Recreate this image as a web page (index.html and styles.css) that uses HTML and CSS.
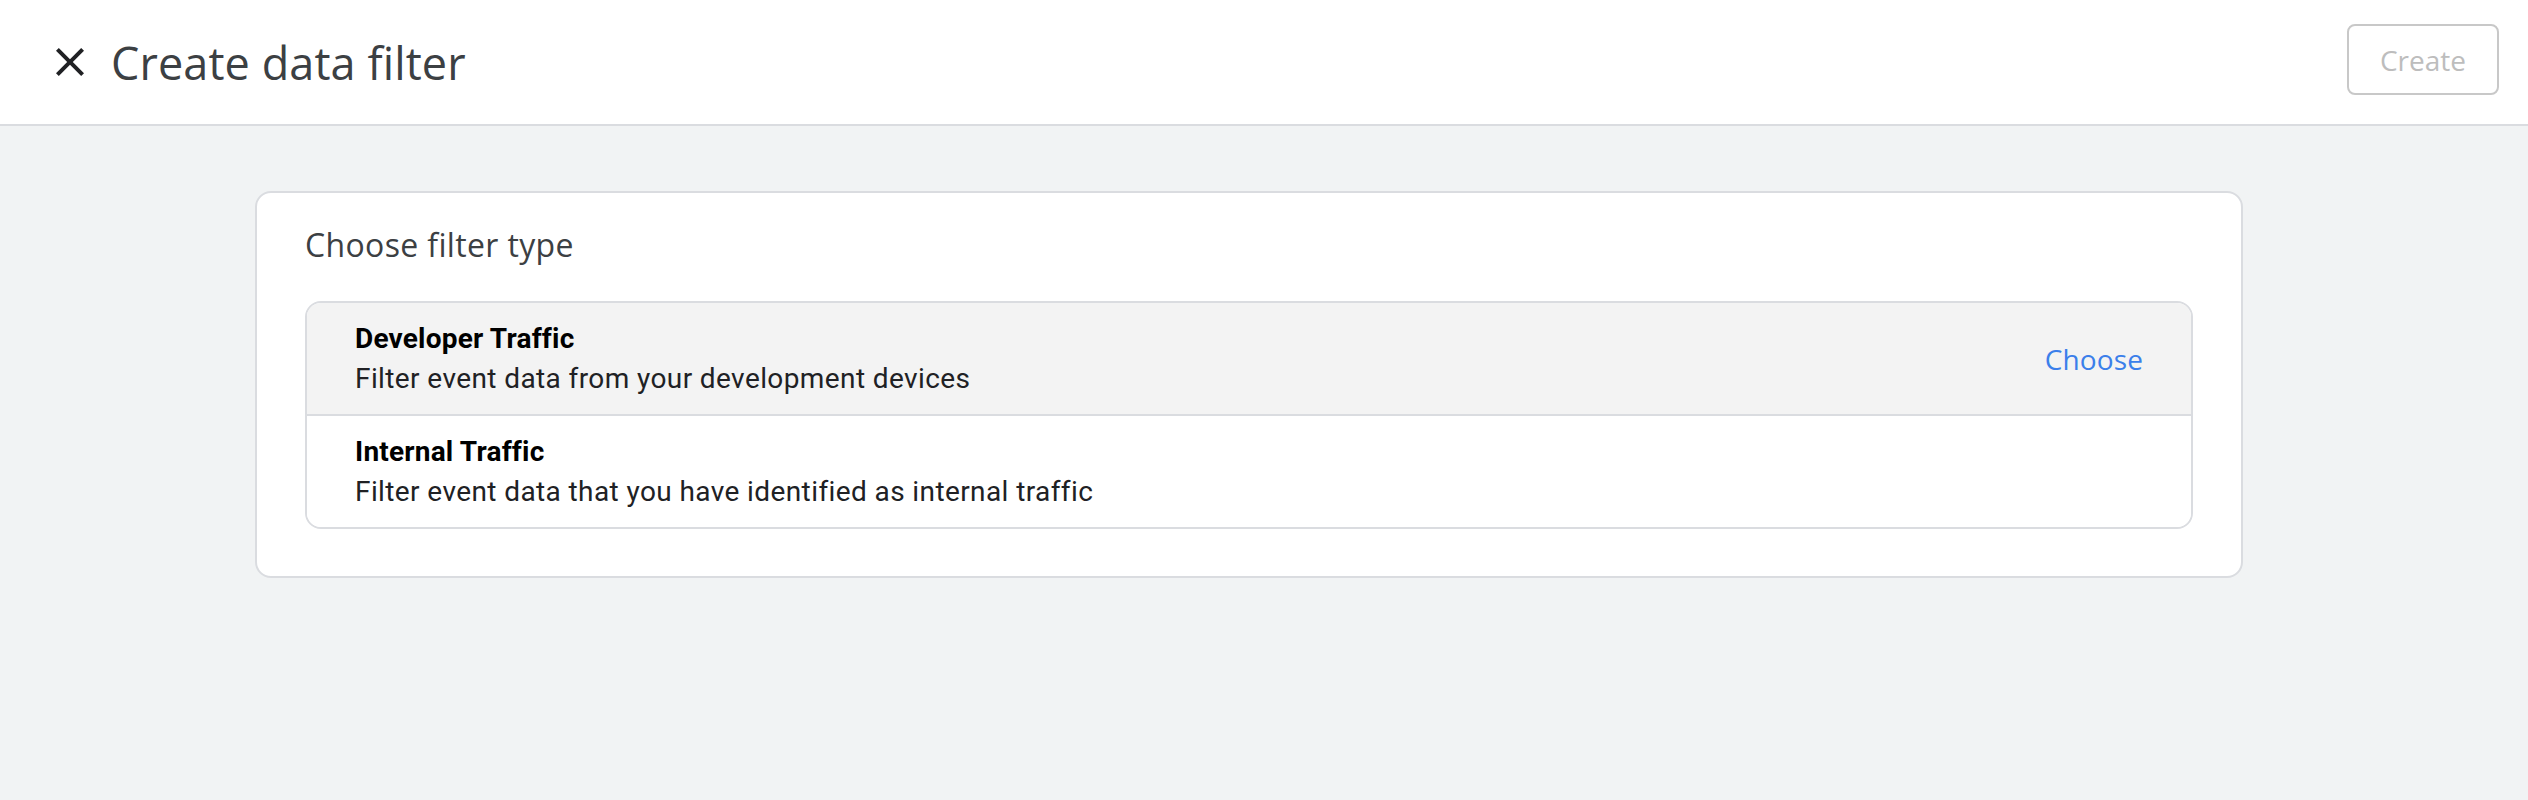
FILE: index.html
```html
<!DOCTYPE html>
<html lang="en">
<head>
<meta charset="utf-8">
<title>Create data filter</title>
<link rel="stylesheet" href="styles.css">
</head>
<body>
<header class="topbar">
  <button class="close-btn" aria-label="Close">
    <svg viewBox="0 0 24 24" width="48" height="48"><path d="M19 6.41L17.59 5 12 10.59 6.41 5 5 6.41 10.59 12 5 17.59 6.41 19 12 13.41 17.59 19 19 17.59 13.41 12z" fill="#202124"/></svg>
  </button>
  <h1 class="page-title">Create data filter</h1>
  <button class="create-btn" disabled>Create</button>
</header>
<main class="content">
  <section class="card">
    <h2 class="card-title">Choose filter type</h2>
    <div class="option-list">
      <div class="option option-hover">
        <div class="option-text">
          <div class="option-name">Developer Traffic</div>
          <div class="option-desc">Filter event data from your development devices</div>
        </div>
        <a class="choose-link" href="#">Choose</a>
      </div>
      <div class="option">
        <div class="option-text">
          <div class="option-name">Internal Traffic</div>
          <div class="option-desc">Filter event data that you have identified as internal traffic</div>
        </div>
      </div>
    </div>
  </section>
</main>
</body>
</html>
```

FILE: styles.css
```css
html, body {
  margin: 0;
  padding: 0;
}
body {
  background: #f1f3f4;
  height: 800px;
  font-family: Roboto, "Liberation Sans", sans-serif;
}
.topbar {
  height: 124px;
  background: #ffffff;
  border-bottom: 2px solid #dadce0;
  display: flex;
  align-items: center;
  padding: 0 29px 0 46px;
}
.close-btn {
  width: 48px;
  height: 48px;
  padding: 0;
  border: 0;
  background: transparent;
  display: flex;
}
.page-title {
  margin: 0 0 0 17px;
  font-family: "Open Sans", sans-serif;
  font-weight: 400;
  font-size: 45px;
  letter-spacing: 0.1px;
  line-height: 56px;
  color: #3c4043;
  flex: 1;
  position: relative;
  top: 1px;
}
.create-btn {
  align-self: flex-start;
  margin-top: 24px;
  height: 71px;
  padding: 0 31px;
  border: 2px solid #c8c8c8;
  border-radius: 8px;
  background: #ffffff;
  font-family: "Open Sans", sans-serif;
  font-weight: 500;
  font-size: 28px;
  color: #bdbdbd;
}
.content {
  padding: 65px 0 0 255px;
}
.card {
  box-sizing: border-box;
  width: 1988px;
  background: #ffffff;
  border: 2px solid #dadce0;
  border-radius: 16px;
  padding: 28px 48px 47px 48px;
}
.card-title {
  margin: 0 0 32px 0;
  font-family: "Open Sans", sans-serif;
  font-weight: 400;
  font-size: 32px;
  letter-spacing: 0.35px;
  line-height: 48px;
  color: #3c4043;
}
.option-list {
  border: 2px solid #dadce0;
  border-radius: 16px;
  overflow: hidden;
}
.option {
  display: flex;
  align-items: center;
  padding: 16px 48px 15px 48px;
  background: #ffffff;
}
.option + .option {
  border-top: 2px solid #dadce0;
}
.option-hover {
  background: #f3f3f3;
}
.option-text {
  flex: 1;
}
.option-name {
  font-weight: 700;
  font-size: 28px;
  line-height: 40px;
  color: #000000;
  letter-spacing: 0.2px;
}
.option-desc {
  font-weight: 400;
  font-size: 28px;
  line-height: 40px;
  color: #202124;
  letter-spacing: 0.4px;
}
.choose-link {
  font-family: "Open Sans", sans-serif;
  font-weight: 500;
  font-size: 28px;
  letter-spacing: 0.1px;
  color: #3b7fea;
  text-decoration: none;
}
```
